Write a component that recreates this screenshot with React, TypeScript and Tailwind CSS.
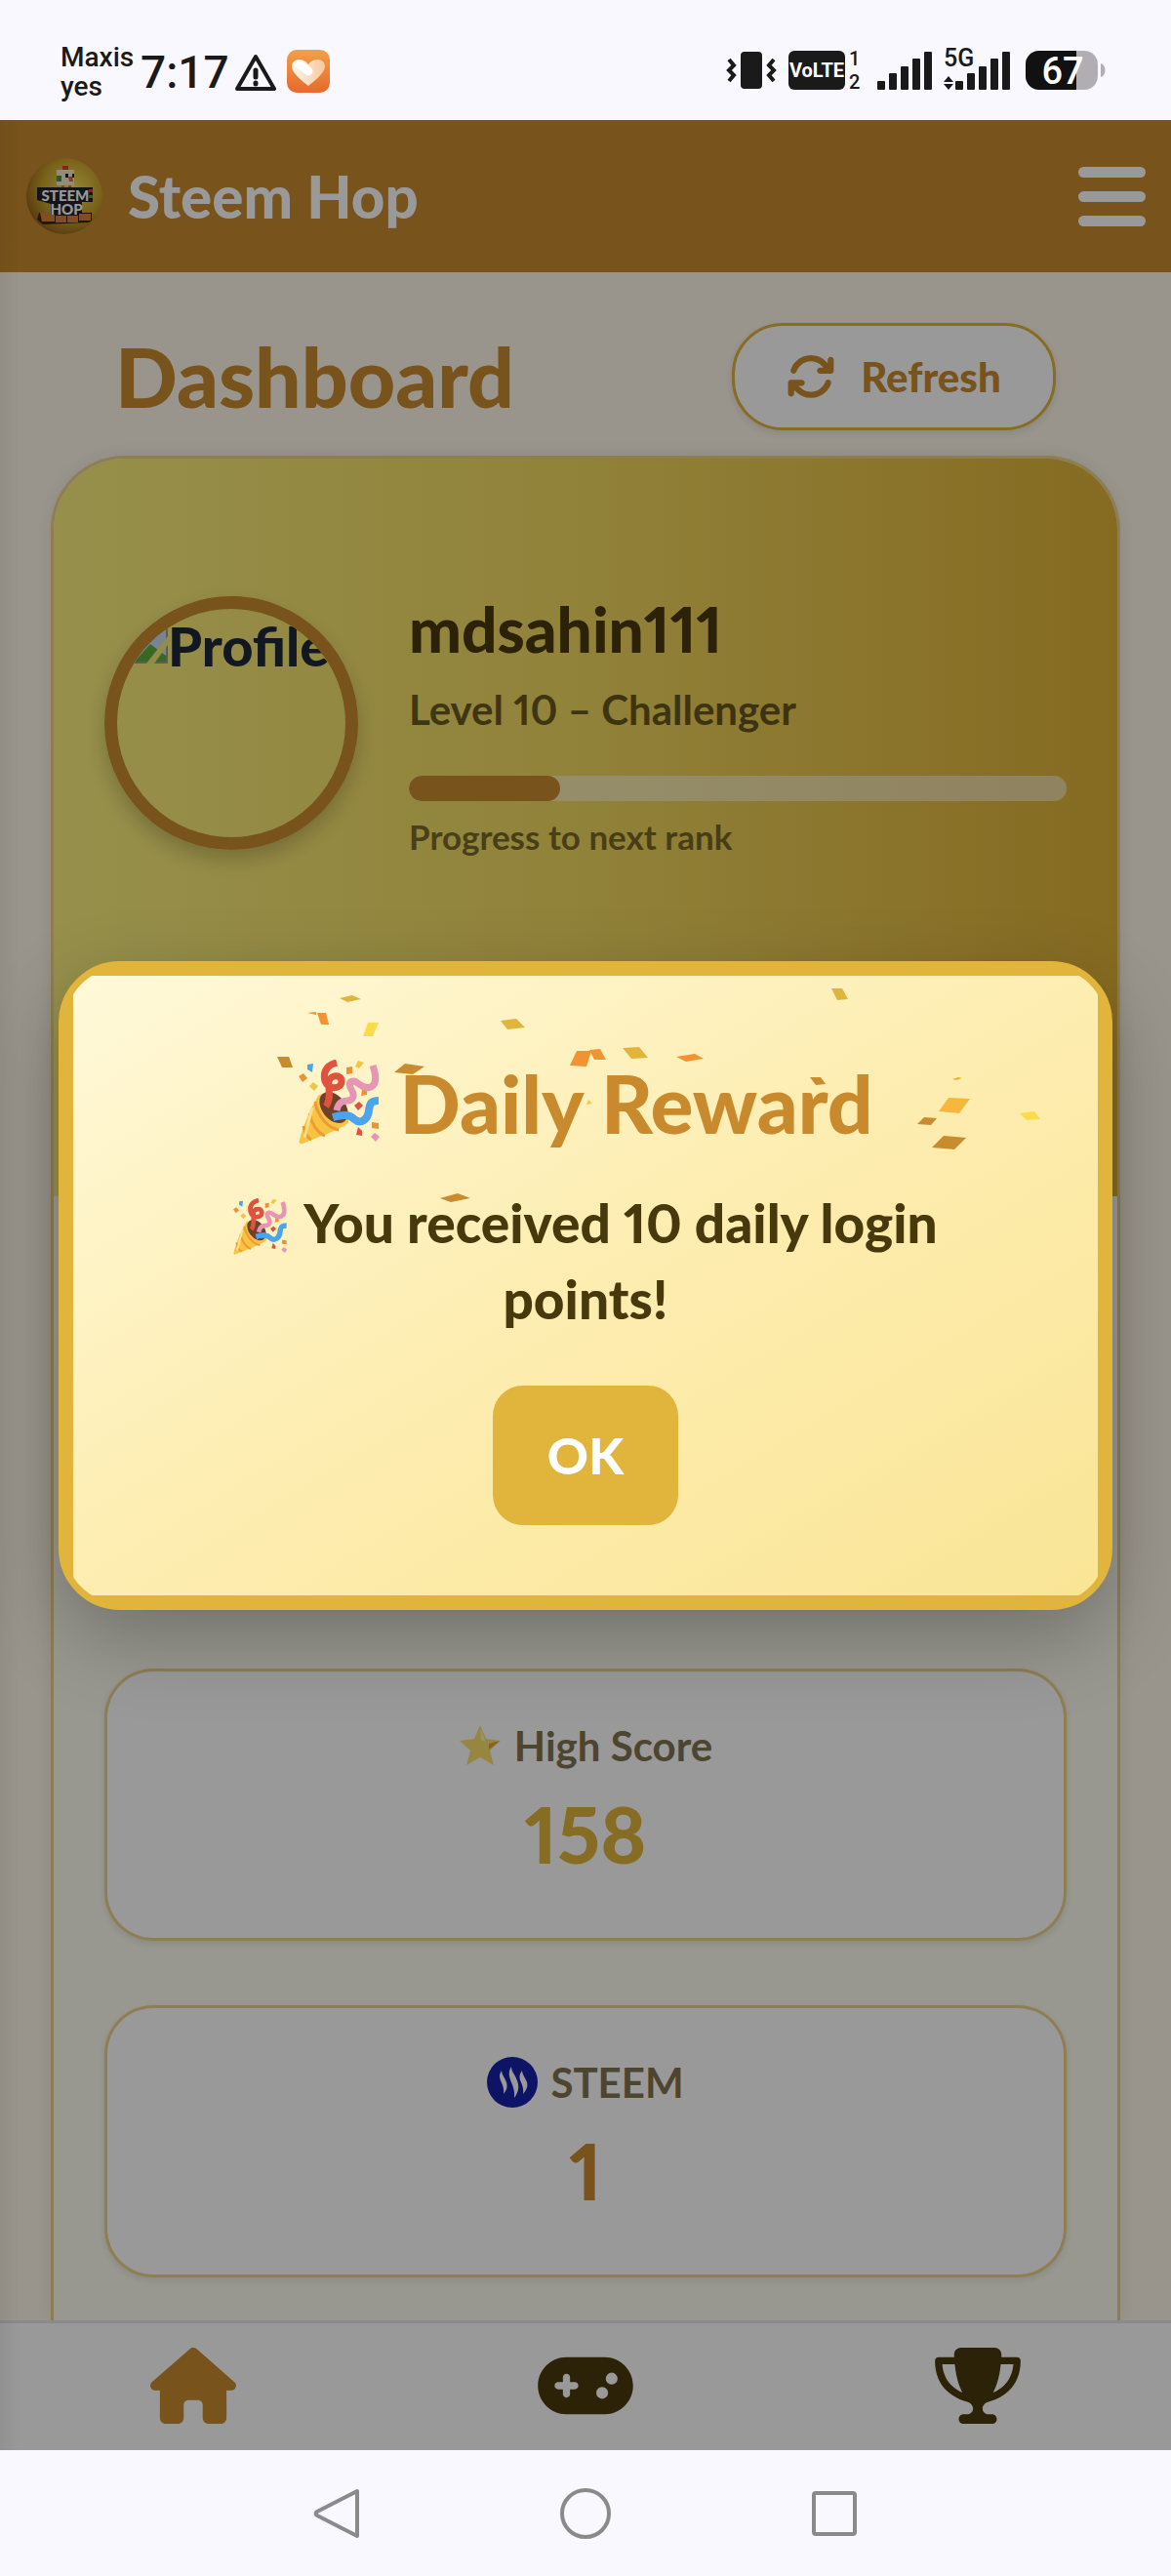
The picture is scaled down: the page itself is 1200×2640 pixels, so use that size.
import React, { FC, ReactNode, useState } from "react";
import {
  FaArrowsRotate,
  FaGamepad,
  FaHouse,
  FaTrophy,
} from "react-icons/fa6";

interface SizeProps {
  className: string;
}

interface StatCardProps {
  icon?: ReactNode;
  label?: string;
  value?: string;
  valueClass?: string;
}

/* Status bar */
const SignalBars: FC = () => (
  <svg viewBox="0 0 56 40" className="h-10 w-14" fill="#1a1a1a">
    <rect x="0" y="31" width="8" height="9" rx="1" />
    <rect x="12" y="23" width="8" height="17" rx="1" />
    <rect x="24" y="16" width="8" height="24" rx="1" />
    <rect x="36" y="8" width="8" height="32" rx="1" />
    <rect x="48" y="1" width="8" height="39" rx="1" />
  </svg>
);

const StatusBar: FC = () => (
  <div className="flex h-[123px] items-start justify-between bg-[#faf8ff] pt-11 pr-[67px] pl-[62px] font-['Roboto',sans-serif] text-[#1a1a1a]">
    <div className="flex items-center">
      <div className="w-[82px] text-[28px] leading-[30px] font-medium">
        <p>Maxis</p>
        <p>yes</p>
      </div>
      <span className="w-24 text-[46px] leading-[60px] font-medium">7:17</span>
      <svg viewBox="0 0 44 40" className="h-10 w-11" fill="none">
        <path
          d="M22 4 41 37H3Z"
          stroke="#1a1a1a"
          strokeWidth="4"
          strokeLinejoin="round"
        />
        <path
          d="M22 18v7M22 31v1"
          stroke="#1a1a1a"
          strokeWidth="5"
          strokeLinecap="round"
        />
      </svg>
      <svg viewBox="0 0 44 50" className="ml-[10px] h-[50px] w-11">
        <defs>
          <linearGradient id="health" x1="0" y1="0" x2="0" y2="1">
            <stop offset="0" stopColor="#f2a04a" />
            <stop offset="1" stopColor="#e66a2c" />
          </linearGradient>
          <linearGradient id="heart" x1="0" y1="0" x2="1" y2="0">
            <stop offset="0" stopColor="#fff5ea" />
            <stop offset="1" stopColor="#f8c89c" />
          </linearGradient>
        </defs>
        <rect y="2" width="44" height="44" rx="10" fill="url(#health)" />
        <path
          d="M22 39C17 35 5 26 5 19c0-8 12-10 17-2 5-8 17-6 17 2 0 7-12 16-17 20Z"
          fill="url(#heart)"
        />
        <path
          d="m13 17 9 7"
          stroke="#fff"
          strokeWidth="9"
          strokeLinecap="round"
        />
      </svg>
    </div>

    <div className="flex h-14 items-center">
      <svg viewBox="0 0 52 40" className="h-10 w-[52px]">
        <rect x="15" y="1" width="22" height="38" rx="4" fill="#1a1a1a" />
        <path
          d="m3 9 5 6-5 5 5 5-5 6M49 9l-5 6 5 5-5 5 5 6"
          fill="none"
          stroke="#1a1a1a"
          strokeWidth="4"
        />
      </svg>
      <span className="ml-3 h-10 w-[58px] rounded-md bg-[#1a1a1a] text-center text-[20px] leading-10 font-bold text-white">
        VoLTE
      </span>
      <div className="ml-1 w-[14px] text-[20px] leading-6 font-medium">
        <p>1</p>
        <p>2</p>
      </div>
      <div className="ml-[15px]">
        <SignalBars />
      </div>
      <div className="relative ml-6">
        <span className="absolute -top-1 -left-3 text-[25px] leading-6 font-medium">
          5G
        </span>
        <SignalBars />
        <svg
          viewBox="0 0 10 14"
          className="absolute bottom-0 -left-3 h-[14px] w-[10px]"
          fill="#1a1a1a"
        >
          <path d="m5 0 5 6H0ZM5 14l5-6H0Z" />
        </svg>
      </div>
      <div className="relative ml-4">
        <svg viewBox="0 0 82 40" className="h-10 w-[82px]">
          <defs>
            <clipPath id="battery">
              <rect width="74" height="40" rx="14" />
            </clipPath>
          </defs>
          <g clipPath="url(#battery)">
            <rect width="74" height="40" fill="#b0aeb3" />
            <rect width="52" height="40" fill="#111" />
          </g>
          <path d="M77 13c6 2 6 12 0 14Z" fill="#b0aeb3" />
        </svg>
        <span className="absolute inset-y-0 left-0 w-[76px] text-center text-[38px] leading-[42px] font-medium text-white">
          67
        </span>
      </div>
    </div>
  </div>
);

/* Drawings */
const HopLogo: FC<SizeProps> = ({ className }) => (
  <svg viewBox="0 0 78 78" className={className}>
    <defs>
      <radialGradient id="egg" cx="0.6" cy="0.4" r="0.65">
        <stop offset="0" stopColor="#f7e25a" />
        <stop offset="0.6" stopColor="#c9a42a" />
        <stop offset="1" stopColor="#94621b" />
      </radialGradient>
    </defs>
    <circle cx="39" cy="39" r="39" fill="url(#egg)" />
    <path d="M37 8h6v5h-6Z" fill="#d8402c" />
    <path d="M31 12h18v16H31Z" fill="#f4ead0" />
    <path d="M31 18h5v6h-5Z" fill="#5f8a42" />
    <path d="M40 16h3v4h-3ZM47 16h2v4h-2Z" fill="#222" />
    <path d="M43 19h4l1 5h-4Z" fill="#dd6a23" />
    <path d="M36 28h3v4h-3ZM43 28h3v4h-3Z" fill="#d9781f" />
    <path d="M11 30h57v15H57v13H25V47l-14-4Z" fill="#20242c" />
    <path d="M64 32h4v3h-4Z" fill="#d8402c" />
    <path d="M64 38h4v3h-4Z" fill="#5f9a42" />
    <text
      x="40"
      y="44"
      fill="#fff"
      fontSize="15"
      fontWeight="900"
      textAnchor="middle"
    >
      STEEM
    </text>
    <text
      x="41"
      y="58"
      fill="#fff"
      fontSize="15"
      fontWeight="900"
      textAnchor="middle"
    >
      HOP
    </text>
    <path d="M13 56h11v2h31v-2h12v8l-3 2-47 2-6-5Z" fill="#3b2510" />
    <path
      d="M14 56h10v2h5v7H16ZM30 59h11v7H30ZM42 59h11v7H42ZM54 57h12v7H54Z"
      fill="#dd8035"
    />
  </svg>
);

const PartyPopper: FC<SizeProps> = ({ className }) => (
  <svg viewBox="0 0 84 87" className={className} fill="none">
    <path
      d="M20 37C26 30 52 46 51 65 40 73 18 80 4 86c-3 1-4-1-3-4C4 70 12 50 20 37Z"
      fill="#f8c440"
    />
    <path
      d="M17 43c2 13 12 27 24 29M11 55c2 10 8 20 16 23M5 68c1 6 4 12 8 14"
      stroke="#ee9a38"
      strokeWidth="3"
    />
    <path d="M14 49 6 80" stroke="#fbe08e" strokeWidth="3" />
    <ellipse
      cx="36"
      cy="49"
      rx="12"
      ry="18"
      transform="rotate(-38 36 49)"
      fill="#6d4228"
    />
    <path
      d="M39 3C27 6 25 14 27 22c3 9 17 9 17 0 0-7-11-7-13 0-1 8 3 18-3 26"
      stroke="#e0523e"
      strokeWidth="7"
    />
    <path
      d="M39 52c3-14 11-7 16-12 5-7-6-11-2-17 6-5 11 9 21 5 8-4 4-16 2-22"
      stroke="#e695b4"
      strokeWidth="7"
    />
    <path
      d="M35 59c11-3 17-3 22 2 7 6 14 0 15-9s4-10 10-10"
      stroke="#4ba5ec"
      strokeWidth="8"
    />
    <path d="m9 5 6-1-1 9-5-3Z" fill="#4ba5ec" />
    <path
      d="m0 17 5-3 4 5-5 4ZM49 8l6-1v7l-6 1ZM65 31l5 1v4l-6 1ZM75 64l7 1v6l-7-1Z"
      fill="#ec9236"
    />
    <path d="m11 27 4-4 5 4-4 5ZM61 1l6 2-5 6-4-2Z" fill="#f4c445" />
    <path d="m62 43 4 4-5 5-4-5ZM61 69l4 4v5l-6-1Z" fill="#dc5240" />
    <path d="m78 75 5 4-4 5-5-5Z" fill="#e695b4" />
  </svg>
);

const Star: FC<SizeProps> = ({ className }) => (
  <svg viewBox="0 0 44 42" className={className}>
    <path
      d="m22 0 6 14 15 2-11 10 4 15-14-8-14 8 4-15L1 16l15-2Z"
      fill="#fae06e"
    />
    <path d="m22 4 1 11 4 2-1-5Z" fill="#fff6b8" />
    <path d="m42 16-11 3 0 6Z" fill="#dfa63a" />
  </svg>
);

const SteemCoin: FC<SizeProps> = ({ className }) => (
  <svg viewBox="0 0 52 52" className={className}>
    <circle cx="26" cy="26" r="26" fill="#1722aa" />
    <path
      d="M15 14c-6 9 4 13 2 24 7-8 2-14 0-18-1-2-2-4-2-6ZM25 10c-7 11 5 18 3 32 8-10 3-18 0-24-2-3-3-5-3-8ZM36 14c-7 9 3 13 1 24 8-9 3-14 1-18-1-2-2-4-2-6Z"
      fill="#fff"
    />
  </svg>
);

const CONFETTI = [
  { color: "#e1b43c", points: "273,23 286,20 295,24 281,27" },
  { color: "#f29232", points: "240,38 249,37 249,40" },
  { color: "#f29232", points: "250,38 259,38 262,50 254,50" },
  { color: "#f9dc4a", points: "302,48 313,48 307,62 297,62" },
  { color: "#c88b2e", points: "209,83 221,83 225,94 214,94" },
  { color: "#c88b2e", points: "340,90 360,93 348,101 329,99" },
  { color: "#e1b43c", points: "438,46 454,44 463,53 445,55" },
  { color: "#f29232", points: "516,77 531,77 526,93 509,92" },
  { color: "#f29232", points: "529,76 540,75 546,86 534,86" },
  { color: "#c88b2e", points: "376,228 394,223 407,228 387,232" },
  { color: "#f5c84a", points: "528,127 532,131 526,132" },
  { color: "#e1b43c", points: "777,13 788,13 794,24 783,25" },
  { color: "#e1b43c", points: "563,74 580,73 589,84 572,85" },
  { color: "#f29232", points: "618,83 637,80 646,85 628,88" },
  { color: "#c88b2e", points: "755,104 766,104 771,111 761,112" },
  { color: "#e1b43c", points: "901,106 907,104 911,105 905,107" },
  { color: "#f5b83c", points: "897,125 919,126 908,141 887,139" },
  { color: "#c88b2e", points: "872,145 885,146 879,153 865,152" },
  { color: "#f9dc4a", points: "970,141 985,139 991,147 977,148" },
  { color: "#c88b2e", points: "892,164 915,166 903,178 880,176" },
];

const Header: FC = () => (
  <header className="flex h-[156px] shrink-0 items-center justify-between bg-[#c88a2d] pr-[26px] pl-[27px]">
    <a href="#" className="flex items-center gap-[26px] text-white">
      <HopLogo className="h-[78px] w-[78px]" />
      <span className="text-[60px] leading-[72px] font-black">Steem Hop</span>
    </a>
    <button
      type="button"
      aria-label="Menu"
      className="flex flex-col gap-[14px]"
    >
      <span className="h-[11px] w-[69px] rounded-full bg-white" />
      <span className="h-[11px] w-[69px] rounded-full bg-white" />
      <span className="h-[11px] w-[69px] rounded-full bg-white" />
    </button>
  </header>
);

const ProfilePanel: FC = () => (
  <section className="flex h-[756px] items-start gap-[52px] bg-linear-to-r from-[#faf07f] via-[#f2d960] to-[#dfb138] px-[52px] pt-[141px]">
    <div className="h-[260px] w-[260px] shrink-0 overflow-hidden rounded-full border-[13px] border-[#c88a2d] shadow-[0_10px_20px_rgba(0,0,0,0.2)]">
      <div className="flex items-center pt-1 pl-4">
        <svg viewBox="0 0 36 36" className="h-9 w-9 shrink-0">
          <path d="M0 0h36v36H0Z" fill="#9a9a9a" />
          <path d="M2 2h32v32H2Z" fill="#c9dcf2" />
          <path d="m2 34 16-18 16 12v6Z" fill="#5cae3c" />
          <path d="M14 36 36 8v9L22 36Z" fill="#f6e878" />
        </svg>
        <span className="text-[56px] leading-[68px] font-black text-[#1f2937]">
          Profile
        </span>
      </div>
    </div>
    <div className="min-w-0 flex-1 text-[#48390d]">
      <h2 className="text-[64px] leading-[68px] font-black proportional-nums">
        mdsahin111
      </h2>
      <p className="mt-6 text-[42px] leading-12 font-bold proportional-nums opacity-80">
        Level 10 – Challenger
      </p>
      <div className="mt-11 h-[26px] overflow-hidden rounded-full bg-white/50">
        <div className="h-full w-[23%] rounded-full bg-[#c88a2d]" />
      </div>
      <p className="mt-4 text-[35px] leading-10 font-bold opacity-70">
        Progress to next rank
      </p>
    </div>
  </section>
);

const StatCard: FC<StatCardProps> = ({ icon, label, value, valueClass }) => (
  <div className="flex h-[279px] flex-col items-center rounded-[50px] border-3 border-[#e1b43c]/60 bg-white pt-[50px] shadow-[0_3px_8px_rgba(0,0,0,0.1)]">
    <div className="flex h-13 items-center gap-[13px] text-[42px] leading-13 font-bold text-[#7f7350]">
      {icon}
      {label}
    </div>
    <p
      className={`mt-4 text-[80px] leading-[96px] font-black proportional-nums ${valueClass}`}
    >
      {value}
    </p>
  </div>
);

const BottomNav: FC = () => (
  <nav className="flex h-[133px] shrink-0 items-start justify-around border-t-3 border-[#e5e7eb] bg-white pt-[25px] text-[#48390d]">
    <a href="#" aria-label="Home" className="text-[#c88a2d]">
      <FaHouse className="h-[78px] w-[88px]" />
    </a>
    <a href="#" aria-label="Play">
      <FaGamepad className="h-[78px] w-[98px]" />
    </a>
    <a href="#" aria-label="Ranking">
      <FaTrophy className="h-[78px] w-[88px]" />
    </a>
  </nav>
);

const RewardModal: FC<{ close: () => void }> = ({ close }) => (
  <div className="absolute inset-0 flex items-center justify-center bg-black/40 px-[60px]">
    <div className="absolute inset-y-0 left-0 w-5 bg-linear-to-r from-black/5 to-transparent" />
    <div
      role="dialog"
      aria-modal="true"
      className="relative w-full overflow-hidden rounded-[63px] border-[7px] border-[#e1b43c] bg-[#e1b43c] shadow-[0_30px_80px_rgba(0,0,0,0.25)]"
    >
      <div className="relative border-8 border-[#e1b43c] bg-linear-to-br from-[#fff9d9] via-[#fdedb0] to-[#fae596] px-20 pt-[82px] pb-[72px] text-center">
        <svg
          viewBox="0 0 1050 635"
          className="absolute inset-0 h-full w-full"
          aria-hidden="true"
        >
          {CONFETTI.map((piece) => (
            <polygon
              key={piece.points}
              points={piece.points}
              fill={piece.color}
            />
          ))}
        </svg>
        <div className="relative">
          <h2 className="flex items-center justify-center gap-5 text-[82px] leading-[96px] font-black text-[#c88a2d]">
            <PartyPopper className="h-[87px] w-[84px]" />
            Daily Reward
          </h2>
          <p className="mt-9 text-[55px] leading-[78px] font-black text-[#48390d] proportional-nums">
            <PartyPopper className="mr-4 inline-block h-[58px] w-14 align-[-12px]" />
            You received 10 daily login points!
          </p>
          <button
            type="button"
            onClick={close}
            className="mt-[50px] h-[143px] w-[190px] rounded-[31px] bg-[#e1b43c] text-[52px] font-black text-white"
          >
            OK
          </button>
        </div>
      </div>
    </div>
  </div>
);

const SystemNav: FC = () => (
  <div className="flex h-[129px] shrink-0 items-center justify-center gap-[203px] bg-[#faf8ff]">
    <button type="button" aria-label="Back">
      <svg viewBox="0 0 52 52" className="h-13 w-13" fill="none">
        <path
          d="M47 3v46L6 28q-3-2 0-4Z"
          stroke="#8a8a8a"
          strokeWidth="4"
          strokeLinejoin="round"
        />
      </svg>
    </button>
    <button type="button" aria-label="Home screen">
      <svg viewBox="0 0 52 52" className="h-13 w-13" fill="none">
        <circle cx="26" cy="26" r="24" stroke="#8a8a8a" strokeWidth="4" />
      </svg>
    </button>
    <button type="button" aria-label="Recent apps">
      <svg viewBox="0 0 52 52" className="h-13 w-13" fill="none">
        <rect
          x="5"
          y="5"
          width="42"
          height="42"
          rx="2"
          stroke="#8a8a8a"
          strokeWidth="4"
        />
      </svg>
    </button>
  </div>
);

const App: FC = () => {
  const [isOpen, setIsOpen] = useState<boolean>(true);

  return (
    <div className="flex min-h-screen flex-col font-['Lato',sans-serif]">
      <StatusBar />
      <div className="relative flex flex-1 flex-col overflow-hidden bg-[#fff9ea]">
        <Header />
        <main className="flex flex-1 flex-col">
          <div className="flex items-center justify-between px-[118px] pt-[52px] pb-[26px]">
            <h1 className="text-[84px] leading-24 font-black text-[#c88a2d]">
              Dashboard
            </h1>
            <button
              type="button"
              className="flex h-[110px] w-[332px] items-center justify-center gap-[26px] rounded-[52px] border-3 border-[#e1b43c] bg-white text-[42px] font-black text-[#c88a2d] shadow-[0_3px_8px_rgba(0,0,0,0.1)]"
            >
              <FaArrowsRotate className="h-[50px] w-[50px]" />
              Refresh
            </button>
          </div>
          <div className="mx-[52px] flex flex-1 flex-col overflow-hidden rounded-t-[76px] border-3 border-b-0 border-[#e1b43c]/60 bg-white shadow-[0_0_20px_rgba(0,0,0,0.08)]">
            <ProfilePanel />
            <section className="flex flex-1 flex-col gap-[66px] bg-linear-to-b from-white to-[#fffef1] to-30% px-[52px] pt-[139px]">
              <StatCard />
              <StatCard
                icon={<Star className="h-[42px] w-11" />}
                label="High Score"
                value="158"
                valueClass="text-[#e1b43c]"
              />
              <StatCard
                icon={<SteemCoin className="h-13 w-13" />}
                label="STEEM"
                value="1"
                valueClass="text-[#c88a2d]"
              />
            </section>
          </div>
        </main>
        <BottomNav />
        {isOpen && <RewardModal close={() => setIsOpen(false)} />}
      </div>
      <SystemNav />
    </div>
  );
};

export default App;
